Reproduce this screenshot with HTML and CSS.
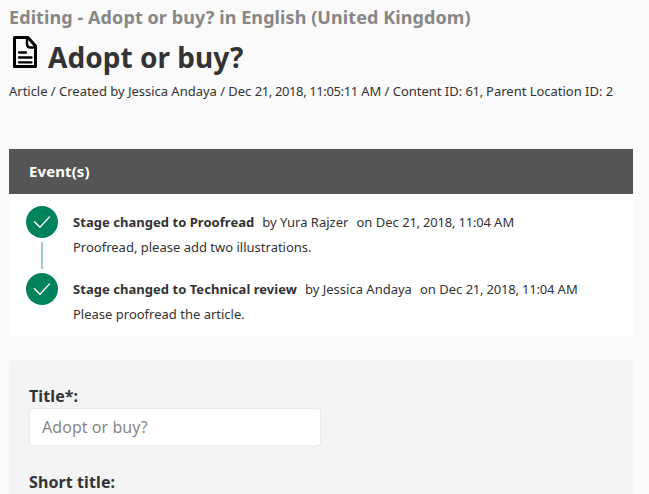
FILE: index.html
```html
<!DOCTYPE html>
<html lang="en">
<head>
<meta charset="utf-8">
<title>Adopt or buy?</title>
<link rel="stylesheet" href="styles.css">
</head>
<body>
<header class="header">
  <div class="context">Editing - Adopt or buy? in English (United Kingdom)</div>
  <h1 class="title">
    <svg class="title-icon" viewBox="0 0 24 32" width="24" height="32" fill="none" stroke="#000" stroke-width="3" stroke-linejoin="round"><path d="M1.500 1.500H15L22.500 10V30.500H1.500Z"/><path d="M14 2V8Q14 11.500 17.500 11.500H22.500" stroke-width="2.4"/><path d="M6 16.500H13M6 21.500H18.500M6 26.300H18.500" stroke-width="2.3" stroke-linecap="round"/></svg>
    <span>Adopt or buy?</span>
  </h1>
  <div class="meta">Article / Created by Jessica Andaya / Dec <span class="digits">21, 2018, 11:05:11</span> AM / Content ID: <span class="digits">61,</span> Parent Location ID: 2</div>
</header>
<section class="events">
  <h2 class="events-head">Event(s)</h2>
  <ul class="timeline">
    <li class="event">
      <span class="badge"><svg viewBox="0 0 32 32" width="32" height="32" fill="none" stroke="#fff" stroke-width="1.4" stroke-linecap="round"><path d="M8.500 15.700L14 21.300L23.500 10.900"/></svg></span>
      <div class="event-text">
        <div class="line"><b>Stage changed to Proofread</b><span>by Yura Rajzer</span><span class="date">on Dec <span class="digits">21, 2018, 11:04</span> AM</span></div>
        <div class="line">Proofread, please add two illustrations.</div>
      </div>
    </li>
    <li class="event">
      <span class="badge"><svg viewBox="0 0 32 32" width="32" height="32" fill="none" stroke="#fff" stroke-width="1.4" stroke-linecap="round"><path d="M8.500 15.700L14 21.300L23.500 10.900"/></svg></span>
      <div class="event-text">
        <div class="line"><b>Stage changed to Technical review</b><span>by Jessica Andaya</span><span class="date">on Dec <span class="digits">21, 2018, 11:04</span> AM</span></div>
        <div class="line">Please proofread the article.</div>
      </div>
    </li>
  </ul>
</section>
<form class="form">
  <label class="label" for="title">Title*:</label>
  <input class="input" id="title" value="Adopt or buy?">
  <div class="label">Short title:</div>
</form>
</body>
</html>
```
FILE: styles.css
```css
* { box-sizing: border-box; }
body {
  display: flex;
  flex-direction: column;
  margin: 0;
  padding: 5px 16px 0 9px;
  height: 494px;
  background: #fafafa;
  color: #333;
  font-family: "Noto Sans", sans-serif;
  font-size: 13px;
}
.header { height: 144px; }
.context { font-size: 18px; line-height: 25px; font-weight: 700; letter-spacing: 0.085px; color: #878787; white-space: nowrap; }
.title { display: flex; align-items: center; gap: 11px; margin: 4px 0 0 4px; height: 46px; font-size: 28px; line-height: 46px; letter-spacing: 0.04px; }
.title-icon { margin-top: -10px; }
.meta { margin-top: 1px; line-height: 20px; letter-spacing: -0.02px; white-space: nowrap; }
.digits { letter-spacing: -0.38px; }
.events { background: #fff; height: 187px; }
.events-head { margin: 0; padding-left: 20px; background: #555; color: #fff; font-size: 15px; line-height: 45px; letter-spacing: 0.1px; }
.timeline { list-style: none; margin: 0; padding: 12px 17px 0; }
.event { display: flex; gap: 15px; height: 67px; }
.badge { display: flex; flex-direction: column; align-items: center; width: 32px; }
.badge svg { flex: none; border-radius: 50%; background: #00825c; }
.event:first-child .badge::after { content: ""; width: 2px; height: 27px; margin-top: 4px; background: #a4c6d4; }
.event-text { padding-top: 4px; }
.line { display: flex; gap: 8px; line-height: 25px; white-space: nowrap; }
.line b { letter-spacing: 0.04px; }
.date .digits { letter-spacing: -0.2px; }
.form { flex: 1; margin-top: 24px; padding: 24px 20px 0; border-radius: 4px 4px 0 0; background: #f4f4f4; }
.label { display: block; font-size: 16px; line-height: 24px; font-weight: 700; letter-spacing: 0.1px; }
.input { display: block; width: 292px; height: 38px; margin-bottom: 24px; padding: 0 12px; border: 1px solid #e9e9e9; border-radius: 4px; background: #fff; color: #878787; font: 16px "Noto Sans", sans-serif; letter-spacing: 0.05px; }
```
